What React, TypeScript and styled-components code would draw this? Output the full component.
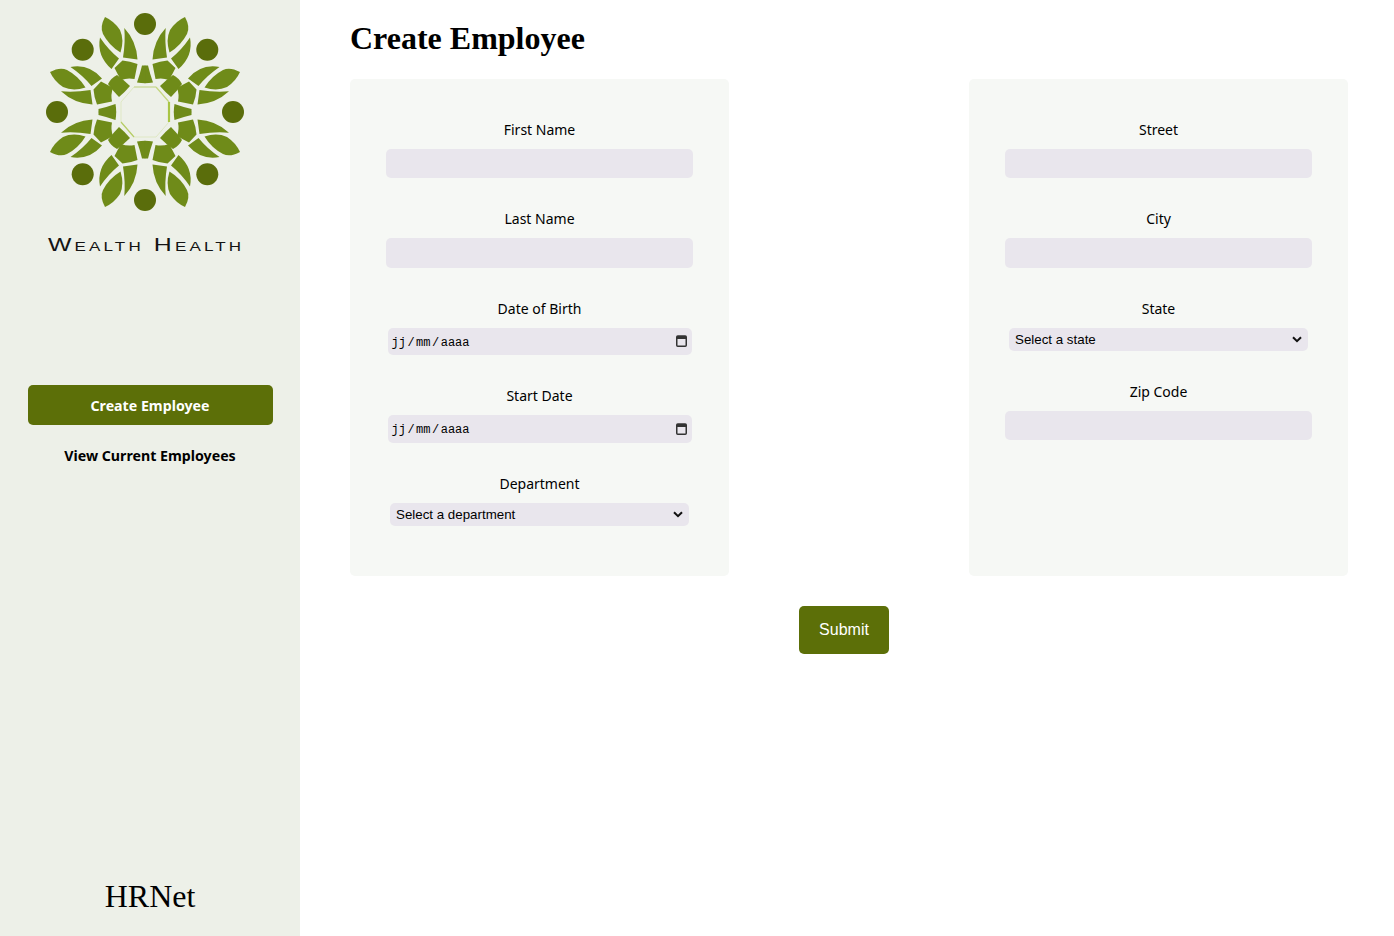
import React from 'react';
import styled, { createGlobalStyle } from 'styled-components';

const GlobalStyle = createGlobalStyle`
  * {
    box-sizing: border-box;
  }

  body {
    margin: 0;
    background: #fff;
    color: #000;
    font-family: 'Noto Sans', sans-serif;
  }
`;

const Page = styled.div`
  display: flex;
  min-height: 936px;
`;

const Sidebar = styled.aside`
  display: flex;
  flex-direction: column;
  align-items: center;
  flex: 0 0 300px;
  height: 936px;
  padding: 12px 0 21px;
  background: #edf0e8;
`;

const LogoBlock = styled.div`
  display: flex;
  flex-direction: column;
  align-items: center;
  margin-right: 11px;
`;

const LogoName = styled.div`
  margin: 22px 0 0 3px;
  font-family: 'Liberation Sans', sans-serif;
  font-size: 17.5px;
  font-variant: small-caps;
  line-height: 22px;
  letter-spacing: 2.2px;
  white-space: nowrap;
  color: #141414;
  transform: scaleX(1.42);
`;

const Nav = styled.nav`
  display: flex;
  flex-direction: column;
  align-items: center;
  margin-top: 129px;
`;

const NavLink = styled.a<{ $active?: boolean }>`
  display: flex;
  align-items: center;
  justify-content: center;
  width: 245px;
  height: 40px;
  margin-bottom: 10px;
  border-radius: 5px;
  background: ${(p) => (p.$active ? '#5c6f08' : 'transparent')};
  color: ${(p) => (p.$active ? '#fff' : '#000')};
  font-size: 14.2px;
  font-weight: 700;
  cursor: pointer;
`;

const Brand = styled.div`
  margin-top: auto;
  font-family: 'Liberation Serif', serif;
  font-size: 32px;
  line-height: 37px;
`;

const Main = styled.main`
  flex: 1;
  padding: 0 46px 0 50px;
`;

const Title = styled.h1`
  margin: 20px 0 23px;
  font-family: 'Liberation Serif', serif;
  font-size: 32px;
  font-weight: 700;
  line-height: 36px;
`;

const Columns = styled.div`
  display: flex;
  justify-content: space-between;
`;

const Card = styled.section`
  display: flex;
  flex-direction: column;
  align-items: center;
  gap: 31px;
  width: 379px;
  height: 497px;
  padding-top: 40.9px;
  border-radius: 5px;
  background: #f6f8f5;
`;

const Field = styled.div`
  display: flex;
  flex-direction: column;
  align-items: center;
  gap: 9px;
  width: 100%;
`;

const Label = styled.label`
  font-size: 14px;
  line-height: 20px;
`;

const TextInput = styled.input`
  display: block;
  width: 307px;
  height: 29.5px;
  border: none;
  border-radius: 5px;
  background: #e9e6ed;
`;

const DateInput = styled.div`
  display: flex;
  align-items: center;
  justify-content: space-between;
  width: 304px;
  height: 27.5px;
  padding: 0 5px 0 4px;
  border-radius: 5px;
  background: #e9e6ed;
`;

const DateText = styled.span`
  display: flex;
  gap: 1.5px;
  padding-top: 2px;
  font-family: 'Liberation Mono', monospace;
  font-size: 12px;
  line-height: 14px;
`;

const CalendarSvg = styled.svg`
  margin-bottom: 1px;
`;

const SelectWrap = styled.div`
  position: relative;
  width: 299px;
  height: 23px;
`;

const Select = styled.select`
  display: block;
  width: 100%;
  height: 100%;
  padding: 0 20px 0 6px;
  border: none;
  border-radius: 5px;
  background: #e9e6ed;
  color: #000;
  font-family: 'Liberation Sans', sans-serif;
  font-size: 13.33px;
  appearance: none;
`;

const ChevronSvg = styled.svg`
  position: absolute;
  top: 8px;
  right: 6px;
  pointer-events: none;
`;

const SubmitRow = styled.div`
  display: flex;
  justify-content: center;
  padding: 30px 10px 0 0;
`;

const SubmitButton = styled.button`
  width: 90px;
  height: 48px;
  border: none;
  border-radius: 5px;
  background: #5c6f08;
  color: #fff;
  font-family: 'Liberation Sans', sans-serif;
  font-size: 16px;
  cursor: pointer;
`;

const LEAF = '#6f8b19';
const DOT = '#5a6d0b';

// one octant of the logo, repeated by rotation and mirroring
const octantPaths = [
  'M40 -95 Q45.5 -85 42 -78 Q36 -66.5 24.5 -59.5 Q20.5 -72 25 -82 Q31 -91 40 -95Z',
  'M20.7 -84 Q8.5 -71 7.5 -52.5 L22 -54.5 Q19.5 -70 20.7 -84Z',
  'M45 -74.5 Q48.5 -56 33.5 -43 L26 -53.5 Q36.5 -62 45 -74.5Z',
  'M7.5 -48 Q15 -51 22.5 -51.5 L30.5 -44 Q27.5 -38 24 -32 Q17.5 -34.5 10.5 -33 Z',
  'M-0.3 -46.5 L3 -46.5 Q5 -38 8 -29.5 Q4 -28.8 -0.3 -28.8Z',
];

const diagonalCell = 'M15 -26 Q21 -32 28 -37 Q34 -34 37 -28 Q32 -21 26 -15 Q20 -20 15 -26Z';

const Logo = () => {
  const turns = [0, 90, 180, 270];
  return (
    <svg width="200" height="200" viewBox="-100 -100 200 200">
      {turns.map((turn) => (
        <g key={turn} transform={`rotate(${turn})`}>
          <circle cx="0" cy="-88" r="11" fill={DOT} />
          <circle cx="62.3" cy="-62.3" r="11" fill={DOT} />
          <path d={diagonalCell} fill={LEAF} />
          {octantPaths.map((d) => (
            <React.Fragment key={d}>
              <path d={d} fill={LEAF} />
              <path d={d} fill={LEAF} transform="scale(-1 1)" />
            </React.Fragment>
          ))}
        </g>
      ))}
      <polygon points="-11,-25 11,-25 24,-10 24,10 11,25 -11,25 -24,10 -24,-10" fill="none" stroke="#dfe8c4" strokeWidth="1" />
      <path d="M11 -25 L24 -10" stroke="#c4d681" strokeWidth="1.2" fill="none" />
      <path d="M24 -10 L24 10" stroke="#a9c545" strokeWidth="2.2" fill="none" />
      <path d="M-24 10 L-11 25" stroke="#b6cd66" strokeWidth="1.2" fill="none" />
      <path d="M-11 -25 L11 -25" stroke="#c9d99a" strokeWidth="1.2" fill="none" />
    </svg>
  );
};

const CalendarIcon = () => (
  <CalendarSvg width="11" height="12" viewBox="0 0 11 12">
    <rect x="0.75" y="1" width="9.5" height="10.25" rx="1" fill="none" stroke="#333" strokeWidth="1.5" />
    <rect x="1" y="1" width="9" height="3" fill="#333" />
  </CalendarSvg>
);

const DateControl = () => (
  <DateInput>
    <DateText>
      <span>jj</span>
      <span>/</span>
      <span>mm</span>
      <span>/</span>
      <span>aaaa</span>
    </DateText>
    <CalendarIcon />
  </DateInput>
);

const SelectControl = ({ options }: { options: string[] }) => (
  <SelectWrap>
    <Select defaultValue={options[0]}>
      {options.map((option) => (
        <option key={option}>{option}</option>
      ))}
    </Select>
    <ChevronSvg width="10" height="7" viewBox="0 0 10 7">
      <path d="M1 1.2 L5 5.2 L9 1.2" fill="none" stroke="#111" strokeWidth="2" />
    </ChevronSvg>
  </SelectWrap>
);

export default function App() {
  return (
    <>
      <GlobalStyle />
      <Page>
        <Sidebar>
          <LogoBlock>
            <Logo />
            <LogoName>Wealth Health</LogoName>
          </LogoBlock>
          <Nav>
            <NavLink $active>Create Employee</NavLink>
            <NavLink>View Current Employees</NavLink>
          </Nav>
          <Brand>HRNet</Brand>
        </Sidebar>
        <Main>
          <Title>Create Employee</Title>
          <Columns>
            <Card>
              <Field>
                <Label>First Name</Label>
                <TextInput type="text" />
              </Field>
              <Field>
                <Label>Last Name</Label>
                <TextInput type="text" />
              </Field>
              <Field>
                <Label>Date of Birth</Label>
                <DateControl />
              </Field>
              <Field>
                <Label>Start Date</Label>
                <DateControl />
              </Field>
              <Field>
                <Label>Department</Label>
                <SelectControl options={['Select a department', 'Sales', 'Marketing', 'Engineering', 'Human Resources', 'Legal']} />
              </Field>
            </Card>
            <Card>
              <Field>
                <Label>Street</Label>
                <TextInput type="text" />
              </Field>
              <Field>
                <Label>City</Label>
                <TextInput type="text" />
              </Field>
              <Field>
                <Label>State</Label>
                <SelectControl options={['Select a state', 'Alabama', 'Alaska', 'Arizona']} />
              </Field>
              <Field>
                <Label>Zip Code</Label>
                <TextInput type="text" />
              </Field>
            </Card>
          </Columns>
          <SubmitRow>
            <SubmitButton type="button">Submit</SubmitButton>
          </SubmitRow>
        </Main>
      </Page>
    </>
  );
}
